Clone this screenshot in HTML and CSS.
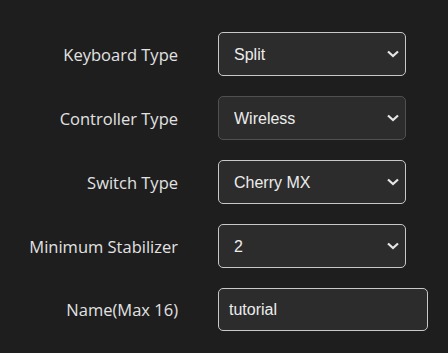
FILE: index.html
```html
<!DOCTYPE html>
<html lang="en">
<head>
    <meta charset="UTF-8">
    <meta name="viewport" content="width=device-width, initial-scale=1.0">
    <title>Keyboard Settings</title>
    <link rel="stylesheet" href="styles.css">
</head>
<body>
    <form class="settings">
        <label class="field-label" for="keyboard-type">Keyboard Type</label>
        <div class="select-wrap">
            <select id="keyboard-type" class="field-select active">
                <option>Split</option>
                <option>Full</option>
            </select>
            <svg class="chevron" width="12" height="8" viewBox="0 0 12 8"><path d="M1 1.5 L6 6 L11 1.5" fill="none" stroke="#e6e6e6" stroke-width="2.2"/></svg>
        </div>

        <label class="field-label" for="controller-type">Controller Type</label>
        <div class="select-wrap">
            <select id="controller-type" class="field-select dim">
                <option>Wireless</option>
                <option>Wired</option>
            </select>
            <svg class="chevron" width="12" height="8" viewBox="0 0 12 8"><path d="M1 1.5 L6 6 L11 1.5" fill="none" stroke="#e6e6e6" stroke-width="2.2"/></svg>
        </div>

        <label class="field-label" for="switch-type">Switch Type</label>
        <div class="select-wrap">
            <select id="switch-type" class="field-select">
                <option>Cherry MX</option>
                <option>Kailh Choc</option>
            </select>
            <svg class="chevron" width="12" height="8" viewBox="0 0 12 8"><path d="M1 1.5 L6 6 L11 1.5" fill="none" stroke="#e6e6e6" stroke-width="2.2"/></svg>
        </div>

        <label class="field-label" for="min-stab">Minimum Stabilizer</label>
        <div class="select-wrap">
            <select id="min-stab" class="field-select">
                <option>2</option>
                <option>3</option>
            </select>
            <svg class="chevron" width="12" height="8" viewBox="0 0 12 8"><path d="M1 1.5 L6 6 L11 1.5" fill="none" stroke="#e6e6e6" stroke-width="2.2"/></svg>
        </div>

        <label class="field-label" for="name">Name(Max 16)</label>
        <input id="name" class="field-input" type="text" maxlength="16" value="tutorial">
    </form>
</body>
</html>
```

FILE: styles.css
```css
body {
    margin: 0;
    background-color: #1e1e1e;
    color: #e0e0e0;
    font-family: "Liberation Sans", Arial, sans-serif;
}
.settings {
    display: grid;
    grid-template-columns: 178px 188px;
    column-gap: 40px;
    row-gap: 20px;
    align-items: center;
    padding-top: 32px;
}
.field-label {
    text-align: right;
    font-family: "Open Sans", "Noto Sans", sans-serif;
    font-size: 16.5px;
    color: #e2e2e2;
}
.select-wrap {
    position: relative;
}
.field-select,
.field-input {
    box-sizing: border-box;
    height: 44px;
    background-color: #2c2c2c;
    color: #ececec;
    border: 1px solid #c8c8c8;
    border-radius: 5px;
    font-family: "Liberation Sans", Arial, sans-serif;
    font-size: 16px;
    outline: none;
}
.field-select {
    width: 188px;
    padding: 0 30px 0 15px;
    appearance: none;
    -webkit-appearance: none;
}
.field-select.dim {
    border-color: #505050;
}
.chevron {
    position: absolute;
    right: 7px;
    top: 18px;
    pointer-events: none;
}
.field-input {
    width: 210px;
    height: 43px;
    padding: 0 10px;
}
```
